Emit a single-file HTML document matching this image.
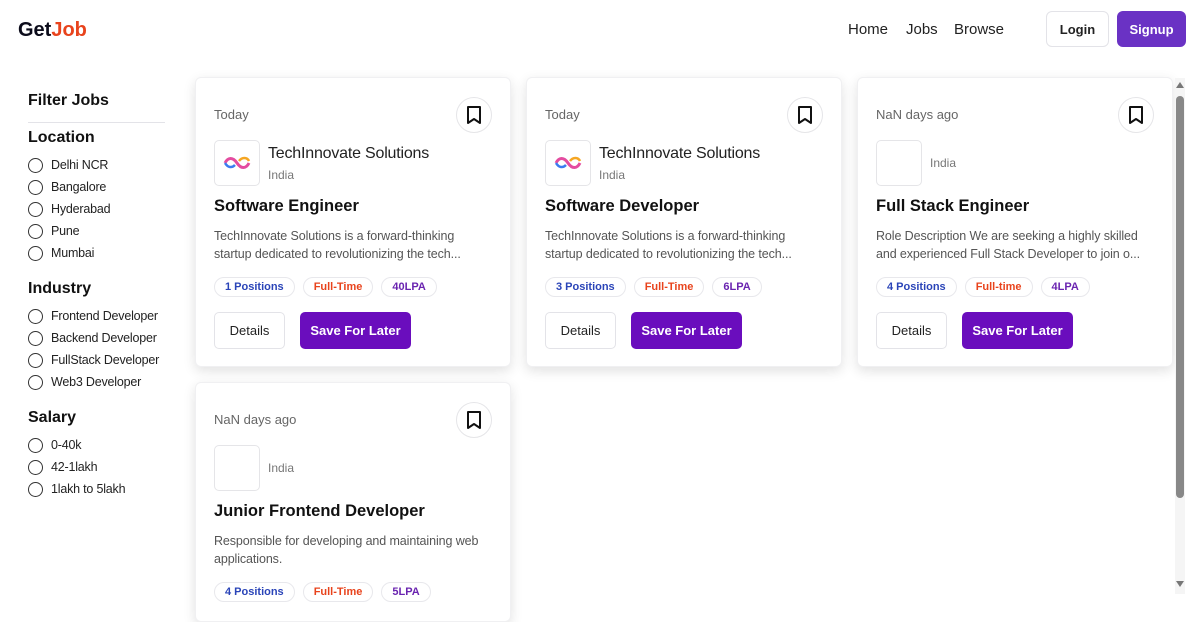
<!DOCTYPE html>
<html><head><meta charset="utf-8"><style>
*{box-sizing:border-box;margin:0;padding:0}
body{width:1190px;height:594px;overflow:hidden;background:#fff;font-family:"Liberation Sans",sans-serif;color:#111;position:relative}
.logo{position:absolute;left:18px;top:19px;font-size:20px;font-weight:bold;color:#0b0b1a}
.logo span{color:#e8431c}
.nav{position:absolute;top:21px;font-size:15px;color:#222}
.btn{position:absolute;border-radius:6px;font-size:13px;font-weight:bold;display:flex;align-items:center;justify-content:center}
.side{position:absolute;left:28px;top:92px;width:150px}
.side h2{font-size:16px;font-weight:bold;margin-bottom:12px}
.side hr{border:0;border-top:1px solid #e3e3e8;margin-bottom:6px;width:137px}
.side h3{font-size:16px;font-weight:bold;margin:0 0 6px}
.opt{display:flex;align-items:center;font-size:12.5px;height:22px;color:#222;white-space:nowrap;letter-spacing:-0.2px;position:relative;top:1px}
.opt i{width:15px;height:15px;border:1.5px solid #333;border-radius:50%;margin-right:8px;flex:none}
.card{position:absolute;width:316px;background:#fff;border:1px solid #f0f0f2;border-radius:6px;box-shadow:0 4px 12px rgba(0,0,0,.12);overflow:hidden}
.date{position:absolute;left:18px;top:29px;font-size:13px;color:#666}
.bm{position:absolute;left:260px;top:19px;width:36px;height:36px;border:1px solid #e5e5e8;border-radius:50%;display:flex;align-items:center;justify-content:center}
.lg{position:absolute;left:18px;top:62px;width:46px;height:46px;border:1px solid #e5e5e8;border-radius:5px;display:flex;align-items:center;justify-content:center}
.co{position:absolute;left:72px;top:67px;font-size:16px;color:#222;letter-spacing:-0.2px}
.loc{position:absolute;left:72px;top:90px;font-size:12px;color:#777}
.ttl{position:absolute;left:18px;top:119px;font-size:16.5px;font-weight:bold}
.desc{position:absolute;left:18px;top:149px;width:276px;font-size:12.5px;line-height:18px;color:#555;letter-spacing:-0.1px}
.tags{position:absolute;left:18px;top:199px;display:flex;gap:8px}
.tag{height:20px;padding:0 10px;border:1px solid #e8e8ec;border-radius:10px;font-size:11px;font-weight:bold;display:flex;align-items:center}
.b1{color:#2a44b8}.b2{color:#e8431c}.b3{color:#6a24b0}
.det{position:absolute;left:18px;top:234px;width:71px;height:37px;border:1px solid #e3e3e8;border-radius:5px;font-size:13px;display:flex;align-items:center;justify-content:center;color:#222}
.save{position:absolute;left:104px;top:234px;width:111px;height:37px;background:#6a0dbd;color:#fff;border-radius:5px;font-size:13px;font-weight:bold;display:flex;align-items:center;justify-content:center}
</style></head><body>
<div class="logo">Get<span>Job</span></div>
<div class="nav" style="left:848px">Home</div>
<div class="nav" style="left:906px">Jobs</div>
<div class="nav" style="left:954px">Browse</div>
<div class="btn" style="left:1046px;top:11px;width:63px;height:36px;border:1px solid #e3e3e8;color:#222">Login</div>
<div class="btn" style="left:1117px;top:11px;width:69px;height:36px;background:#6a32c4;color:#fff">Signup</div>

<div class="side">
<h2>Filter Jobs</h2><hr>
<h3>Location</h3>
<div class="opt"><i></i>Delhi NCR</div><div class="opt"><i></i>Bangalore</div><div class="opt"><i></i>Hyderabad</div><div class="opt"><i></i>Pune</div><div class="opt"><i></i>Mumbai</div>
<h3 style="margin-top:17px">Industry</h3>
<div class="opt"><i></i>Frontend Developer</div><div class="opt"><i></i>Backend Developer</div><div class="opt"><i></i>FullStack Developer</div><div class="opt"><i></i>Web3 Developer</div>
<h3 style="margin-top:17px">Salary</h3>
<div class="opt"><i></i>0-40k</div><div class="opt"><i></i>42-1lakh</div><div class="opt"><i></i>1lakh to 5lakh</div>
</div>

<div class="card" style="left:195px;top:77px;height:290px">
<div class="date">Today</div>
<div class="bm"><svg width="18" height="20" viewBox="0 0 18 20"><path d="M3 2h12v16l-6-4-6 4z" fill="none" stroke="#111" stroke-width="2" stroke-linejoin="round"/></svg></div>
<div class="lg"><svg width="30" height="16" viewBox="0 0 30 16"><path d="M3 8c3-6 8-6 12 0s9 6 12 0" fill="none" stroke="#e44ca0" stroke-width="3"/><path d="M3 8c3 5 7 5 10 2" fill="none" stroke="#3b7bf0" stroke-width="2.5"/><path d="M17 6c3-4 8-4 10 0" fill="none" stroke="#f5a623" stroke-width="2.5"/></svg></div>
<div class="co">TechInnovate Solutions</div><div class="loc">India</div>
<div class="ttl">Software Engineer</div>
<div class="desc">TechInnovate Solutions is a forward-thinking startup dedicated to revolutionizing the tech...</div>
<div class="tags"><div class="tag b1">1 Positions</div><div class="tag b2">Full-Time</div><div class="tag b3">40LPA</div></div>
<div class="det">Details</div><div class="save">Save For Later</div>
</div>

<div class="card" style="left:526px;top:77px;height:290px">
<div class="date">Today</div>
<div class="bm"><svg width="18" height="20" viewBox="0 0 18 20"><path d="M3 2h12v16l-6-4-6 4z" fill="none" stroke="#111" stroke-width="2" stroke-linejoin="round"/></svg></div>
<div class="lg"><svg width="30" height="16" viewBox="0 0 30 16"><path d="M3 8c3-6 8-6 12 0s9 6 12 0" fill="none" stroke="#e44ca0" stroke-width="3"/><path d="M3 8c3 5 7 5 10 2" fill="none" stroke="#3b7bf0" stroke-width="2.5"/><path d="M17 6c3-4 8-4 10 0" fill="none" stroke="#f5a623" stroke-width="2.5"/></svg></div>
<div class="co">TechInnovate Solutions</div><div class="loc">India</div>
<div class="ttl">Software Developer</div>
<div class="desc">TechInnovate Solutions is a forward-thinking startup dedicated to revolutionizing the tech...</div>
<div class="tags"><div class="tag b1">3 Positions</div><div class="tag b2">Full-Time</div><div class="tag b3">6LPA</div></div>
<div class="det">Details</div><div class="save">Save For Later</div>
</div>

<div class="card" style="left:857px;top:77px;height:290px">
<div class="date">NaN days ago</div>
<div class="bm"><svg width="18" height="20" viewBox="0 0 18 20"><path d="M3 2h12v16l-6-4-6 4z" fill="none" stroke="#111" stroke-width="2" stroke-linejoin="round"/></svg></div>
<div class="lg"></div>
<div class="loc" style="top:78px">India</div>
<div class="ttl">Full Stack Engineer</div>
<div class="desc">Role Description We are seeking a highly skilled and experienced Full Stack Developer to join o...</div>
<div class="tags"><div class="tag b1">4 Positions</div><div class="tag b2">Full-time</div><div class="tag b3">4LPA</div></div>
<div class="det">Details</div><div class="save">Save For Later</div>
</div>

<div class="card" style="left:195px;top:382px;height:240px">
<div class="date">NaN days ago</div>
<div class="bm"><svg width="18" height="20" viewBox="0 0 18 20"><path d="M3 2h12v16l-6-4-6 4z" fill="none" stroke="#111" stroke-width="2" stroke-linejoin="round"/></svg></div>
<div class="lg"></div>
<div class="loc" style="top:78px">India</div>
<div class="ttl">Junior Frontend Developer</div>
<div class="desc">Responsible for developing and maintaining web applications.</div>
<div class="tags"><div class="tag b1">4 Positions</div><div class="tag b2">Full-Time</div><div class="tag b3">5LPA</div></div>
</div>

<div style="position:absolute;left:1175px;top:78px;width:10px;height:516px;background:#f5f5f5"></div>
<div style="position:absolute;left:1176px;top:96px;width:8px;height:402px;background:#888;border-radius:4px"></div>
<div style="position:absolute;left:1176px;top:82px;width:0;height:0;border-left:4px solid transparent;border-right:4px solid transparent;border-bottom:6px solid #777"></div>
<div style="position:absolute;left:1176px;top:581px;width:0;height:0;border-left:4px solid transparent;border-right:4px solid transparent;border-top:6px solid #777"></div>
</body></html>
